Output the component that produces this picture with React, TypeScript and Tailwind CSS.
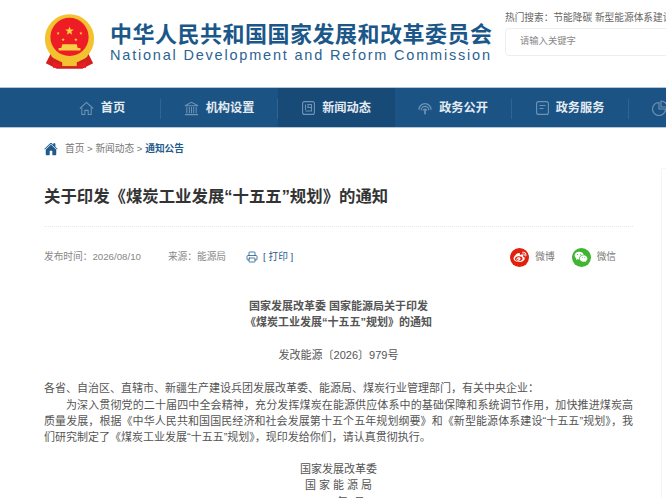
import { Printer } from "lucide-react"
import { IoHome } from "react-icons/io5"
import { RiWeiboFill, RiWechatFill } from "react-icons/ri"

const ICON = "#6f93b4"

function Emblem() {
  const stars = [
    [28, 18.5, 5],
    [15.5, 21, 1.9],
    [40.5, 21, 1.9],
    [21, 28, 1.9],
    [35, 28, 1.9],
  ]
  return (
    <svg width="51" height="55" viewBox="0 0 56 60" className="shrink-0">
      <path d="M8 42 L2 54 L14 60 L42 60 L54 54 L48 42 Z" fill="#d3201f" />
      <circle cx="28" cy="27" r="27" fill="#f2c230" />
      <circle cx="28" cy="25" r="21" fill="#ee1c25" />
      {stars.map(([x, y, r], i) => {
        const pts = Array.from({ length: 10 }, (_, k) => {
          const a = (Math.PI / 5) * k - Math.PI / 2
          const rr = k % 2 ? r * 0.42 : r
          return `${x + rr * Math.cos(a)},${y + rr * Math.sin(a)}`
        }).join(" ")
        return <polygon key={i} points={pts} fill="#f8d33a" />
      })}
      <path d="M20 33 h16 l1 4 h3 v3 H16 v-3 h3 Z" fill="#f6cf45" />
      <path d="M10 42 C16 50 40 50 46 42 L48 46 C42 54 14 54 8 46 Z" fill="#f2c230" />
      <path d="M20 52 h16 v5 H20 Z" fill="#f2c230" />
      <path d="M10 52 L20 57 L10 59 Z M46 52 L36 57 L46 59 Z" fill="#ee1c25" />
    </svg>
  )
}

function HomeIcon() {
  return (
    <svg width="15" height="15" viewBox="0 0 16 16" fill="none" stroke={ICON} strokeWidth="1.1" strokeLinejoin="round">
      <path d="M1 8 L8 1.5 L15 8" />
      <path d="M3 6.8 V14.5 H6.2 V10 H9.8 V14.5 H13 V6.8" />
    </svg>
  )
}

function BankIcon() {
  return (
    <svg width="15" height="15" viewBox="0 0 16 16" fill="none" stroke={ICON} strokeWidth="1.1">
      <path d="M1 5 L8 1.5 L15 5 Z" />
      <path d="M3 6.5 V13 M5.7 6.5 V13 M8 6.5 V13 M10.3 6.5 V13 M13 6.5 V13" />
      <path d="M1 14.5 H15" strokeWidth="1.4" />
    </svg>
  )
}

function NewsIcon() {
  return (
    <svg width="13" height="14" viewBox="0 0 13 14" fill="none" stroke={ICON} strokeWidth="1.1">
      <rect x="0.6" y="0.6" width="11.8" height="12.8" rx="2" />
      <path d="M3.5 3.5 V9 M6 3.5 H9.5 V6.5 H6 Z M9.5 6.5 V10 H3.5" />
    </svg>
  )
}

function FanIcon() {
  return (
    <svg width="14" height="14" viewBox="0 0 16 16" fill="none" stroke={ICON} strokeWidth="1.5">
      <path d="M1 10a7 7 0 0 1 14 0" />
      <path d="M3.7 10.5a4.3 4.3 0 0 1 8.6 0" />
      <path d="M6.2 11a1.8 1.8 0 0 1 3.6 0" />
      <path d="M8 9 V15" strokeWidth="2" />
    </svg>
  )
}

function DocIcon() {
  return (
    <svg width="13" height="14" viewBox="0 0 13 14" fill="none" stroke={ICON} strokeWidth="1.1">
      <rect x="0.6" y="0.6" width="11.8" height="12.8" rx="2" />
      <path d="M3.5 4.5 H9.5 M3.5 7.5 H7.5" />
    </svg>
  )
}

function PieIcon() {
  return (
    <svg width="16" height="16" viewBox="0 0 16 16" fill="none" stroke={ICON} strokeWidth="1.1">
      <path d="M7 2.5 A6.5 6.5 0 1 0 13.5 9 H7 Z" />
      <path d="M9 1 A6 6 0 0 1 15 7 H9 Z" />
    </svg>
  )
}

const navItems = [
  { label: "首页", icon: <HomeIcon />, divider: true },
  { label: "机构设置", icon: <BankIcon />, divider: true },
  { label: "新闻动态", icon: <NewsIcon />, active: true },
  { label: "政务公开", icon: <FanIcon />, divider: true },
  { label: "政务服务", icon: <DocIcon />, divider: true },
  { label: "政策文件", icon: <PieIcon /> },
]

export default function App() {
  return (
    <div className="relative h-[498px] w-[666px] overflow-hidden bg-white font-['Liberation_Sans','Noto_Sans_CJK_SC',sans-serif]">
      {/* Header */}
      <div className="flex h-[87px] w-[800px] pl-[44px]">
        <div className="mt-[14px]">
          <Emblem />
        </div>
        <div className="ml-[15px] mt-[21px] w-[382px]">
          <div className="text-[22px] font-bold leading-[27px] tracking-[0.5px] text-[#1b5788] whitespace-nowrap">
            中华人民共和国国家发展和改革委员会
          </div>
          <div className="text-[14.5px] leading-[14px] tracking-[1.8px] text-[#2c6391] whitespace-nowrap">
            National Development and Reform Commission
          </div>
        </div>
        <div className="ml-[13px] mt-[11px] w-[260px]">
          <div className="text-[9.7px] leading-[13px] text-[#666] whitespace-nowrap">
            热门搜索：节能降碳&nbsp;新型能源体系建设
          </div>
          <div className="mt-[4px] flex h-[28px] items-center rounded-[4px] border border-[#eeeeee] pl-[14px] text-[9.3px] text-[#888]">
            请输入关键字
          </div>
        </div>
      </div>

      {/* Nav */}
      <div className="flex h-[41px] w-[800px] border-y border-[#b5c6d6] bg-[#1b5484] pl-[44px]">
        {navItems.map((item) => (
          <div
            key={item.label}
            className={`flex h-full w-[117px] shrink-0 items-center pt-[2px] ${item.active ? "bg-[#184a78]" : ""}`}
          >
            <div className="flex flex-1 items-center justify-center gap-[7px]">
              {item.icon}
              <span className="text-[12.2px] font-bold text-[#e4ebf2] whitespace-nowrap">{item.label}</span>
            </div>
            {item.divider && <span className="h-[20px] w-px bg-[#2f6594]" />}
          </div>
        ))}
      </div>

      <div className="pl-[44px] pr-[33px]">
        {/* Breadcrumb */}
        <div className="mt-[13px] flex h-[16px] items-center text-[9.7px] text-[#777]">
          <IoHome size={14} color="#1f5a8b" />
          <span className="ml-[7px]">首页&nbsp;&gt;&nbsp;新闻动态&nbsp;&gt;&nbsp;</span>
          <span className="font-bold text-[#1f5a8b]">通知公告</span>
        </div>

        {/* Title */}
        <h1 className="mt-[27px] text-[16.4px] font-bold leading-[24px] text-[#333] whitespace-nowrap">
          关于印发《煤炭工业发展“十五五”规划》的通知
        </h1>
        <div className="mt-[18px] border-t border-dotted border-[#e6e6e6]" />

        {/* Meta */}
        <div className="mt-[20px] flex h-[20px] items-center text-[9.7px] text-[#888]">
          <span>发布时间：2026/08/10</span>
          <span className="ml-[27px]">来源：能源局</span>
          <span className="ml-[20px] flex items-center text-[#1f5a8b]">
            <Printer size={12} strokeWidth={1.6} />
            <span className="ml-[5px]">[ 打印 ]</span>
          </span>
          <span className="ml-auto mr-[17px] flex items-center">
            <span className="flex h-[19px] w-[19px] items-center justify-center rounded-full bg-[#e0210e]">
              <RiWeiboFill size={14} color="#fff" />
            </span>
            <span className="ml-[6px] text-[#777]">微博</span>
            <span className="ml-[17px] flex h-[19px] w-[19px] items-center justify-center rounded-full bg-[#3fb532]">
              <RiWechatFill size={14} color="#fff" />
            </span>
            <span className="ml-[6px] text-[#777]">微信</span>
          </span>
        </div>

        {/* Body */}
        <div className="mt-[31px] text-justify text-[11px] leading-[16.4px] text-[#555]">
          <div className="text-center font-bold">
            <p>国家发展改革委 国家能源局关于印发</p>
            <p>《煤炭工业发展“十五五”规划》的通知</p>
          </div>
          <p className="mt-[16px] text-center">发改能源〔2026〕979号</p>
          <p className="mt-[17px]">各省、自治区、直辖市、新疆生产建设兵团发展改革委、能源局、煤炭行业管理部门，有关中央企业：</p>
          <p className="indent-[22px]">
            为深入贯彻党的二十届四中全会精神，充分发挥煤炭在能源供应体系中的基础保障和系统调节作用，加快推进煤炭高质量发展，根据《中华人民共和国国民经济和社会发展第十五个五年规划纲要》和《新型能源体系建设“十五五”规划》，我们研究制定了《煤炭工业发展“十五五”规划》，现印发给你们，请认真贯彻执行。
          </p>
          <div className="mt-[15px] text-center">
            <p>国家发展改革委</p>
            <p>国 家 能 源 局</p>
            <p>2026年8月</p>
          </div>
        </div>
      </div>

      {/* faint edge of the floating side panel */}
      <div className="absolute left-[661px] top-[168px] h-[400px] w-[20px] border border-[#f6f6f6]" />
    </div>
  )
}
